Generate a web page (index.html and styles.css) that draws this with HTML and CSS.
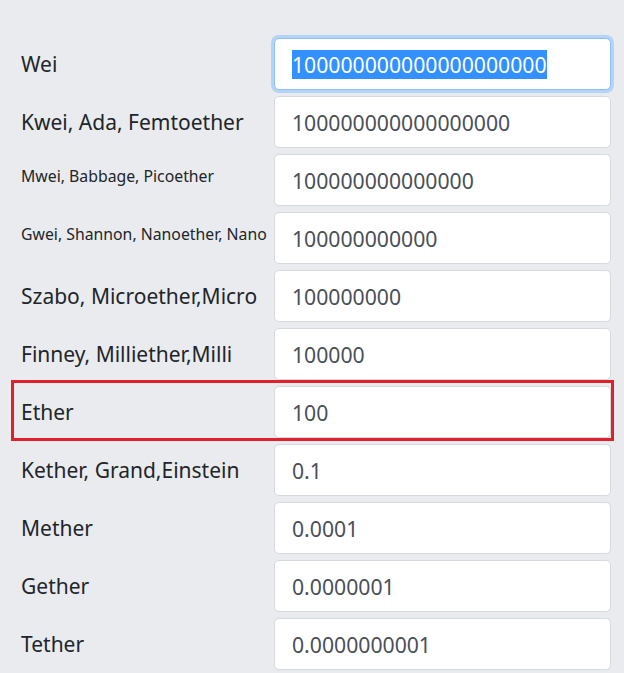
FILE: index.html
```html
<!DOCTYPE html>
<html lang="en">

<head>
    <meta charset="UTF-8">
    <meta name="viewport" content="width=device-width, initial-scale=1.0">
    <title>Ether Units</title>
    <link rel="stylesheet" href="styles.css">
</head>

<body>
    <div class="units">
        <div class="unit-row">
            <label class="unit-label">Wei</label>
            <div class="unit-field focused"><span class="selected">100000000000000000000</span></div>
        </div>
        <div class="unit-row">
            <label class="unit-label">Kwei, Ada, Femtoether</label>
            <div class="unit-field">100000000000000000</div>
        </div>
        <div class="unit-row">
            <label class="unit-label small">Mwei, Babbage, Picoether</label>
            <div class="unit-field">100000000000000</div>
        </div>
        <div class="unit-row">
            <label class="unit-label small">Gwei, Shannon, Nanoether, Nano</label>
            <div class="unit-field">100000000000</div>
        </div>
        <div class="unit-row">
            <label class="unit-label">Szabo, Microether,Micro</label>
            <div class="unit-field">100000000</div>
        </div>
        <div class="unit-row">
            <label class="unit-label">Finney, Milliether,Milli</label>
            <div class="unit-field">100000</div>
        </div>
        <!-- 红框标注 -->
        <div class="unit-row marked">
            <label class="unit-label">Ether</label>
            <div class="unit-field">100</div>
        </div>
        <div class="unit-row">
            <label class="unit-label">Kether, Grand,Einstein</label>
            <div class="unit-field">0.1</div>
        </div>
        <div class="unit-row">
            <label class="unit-label">Mether</label>
            <div class="unit-field">0.0001</div>
        </div>
        <div class="unit-row">
            <label class="unit-label">Gether</label>
            <div class="unit-field">0.0000001</div>
        </div>
        <div class="unit-row">
            <label class="unit-label">Tether</label>
            <div class="unit-field">0.0000000001</div>
        </div>
    </div>
</body>

</html>
```

FILE: styles.css
```css
body {
    margin: 0;
    background-color: #e9ebee;
    font-family: "Noto Sans", "Open Sans", sans-serif;
    color: #212529;
}

.units {
    display: flex;
    flex-direction: column;
    gap: 6px;
    padding: 38px 13px 0 21px;
}

.unit-row {
    position: relative;
    display: flex;
    align-items: center;
    height: 52px;
}

.unit-label {
    width: 253px;
    flex-shrink: 0;
    font-size: 21px;
    white-space: nowrap;
}

.unit-label.small {
    font-size: 15.8px;
    margin-top: -8px;
}

/* 输入框样式 */
.unit-field {
    box-sizing: border-box;
    flex: 1;
    height: 52px;
    display: flex;
    align-items: center;
    padding: 0 17px;
    background-color: #fff;
    border: 1px solid #d6d9dd;
    border-radius: 5px;
    font-size: 21.2px;
    color: #495057;
}

.unit-field.focused {
    border-color: #8fc1f7;
    box-shadow: 0 0 0 3px #b4d3f6;
}

.selected {
    background-color: #3390ff;
    color: #fff;
}

/* 红框 */
.marked::after {
    content: "";
    position: absolute;
    left: -10px;
    right: -3px;
    top: -6px;
    bottom: -3px;
    border: 3px solid #e0202b;
    pointer-events: none;
}
```
